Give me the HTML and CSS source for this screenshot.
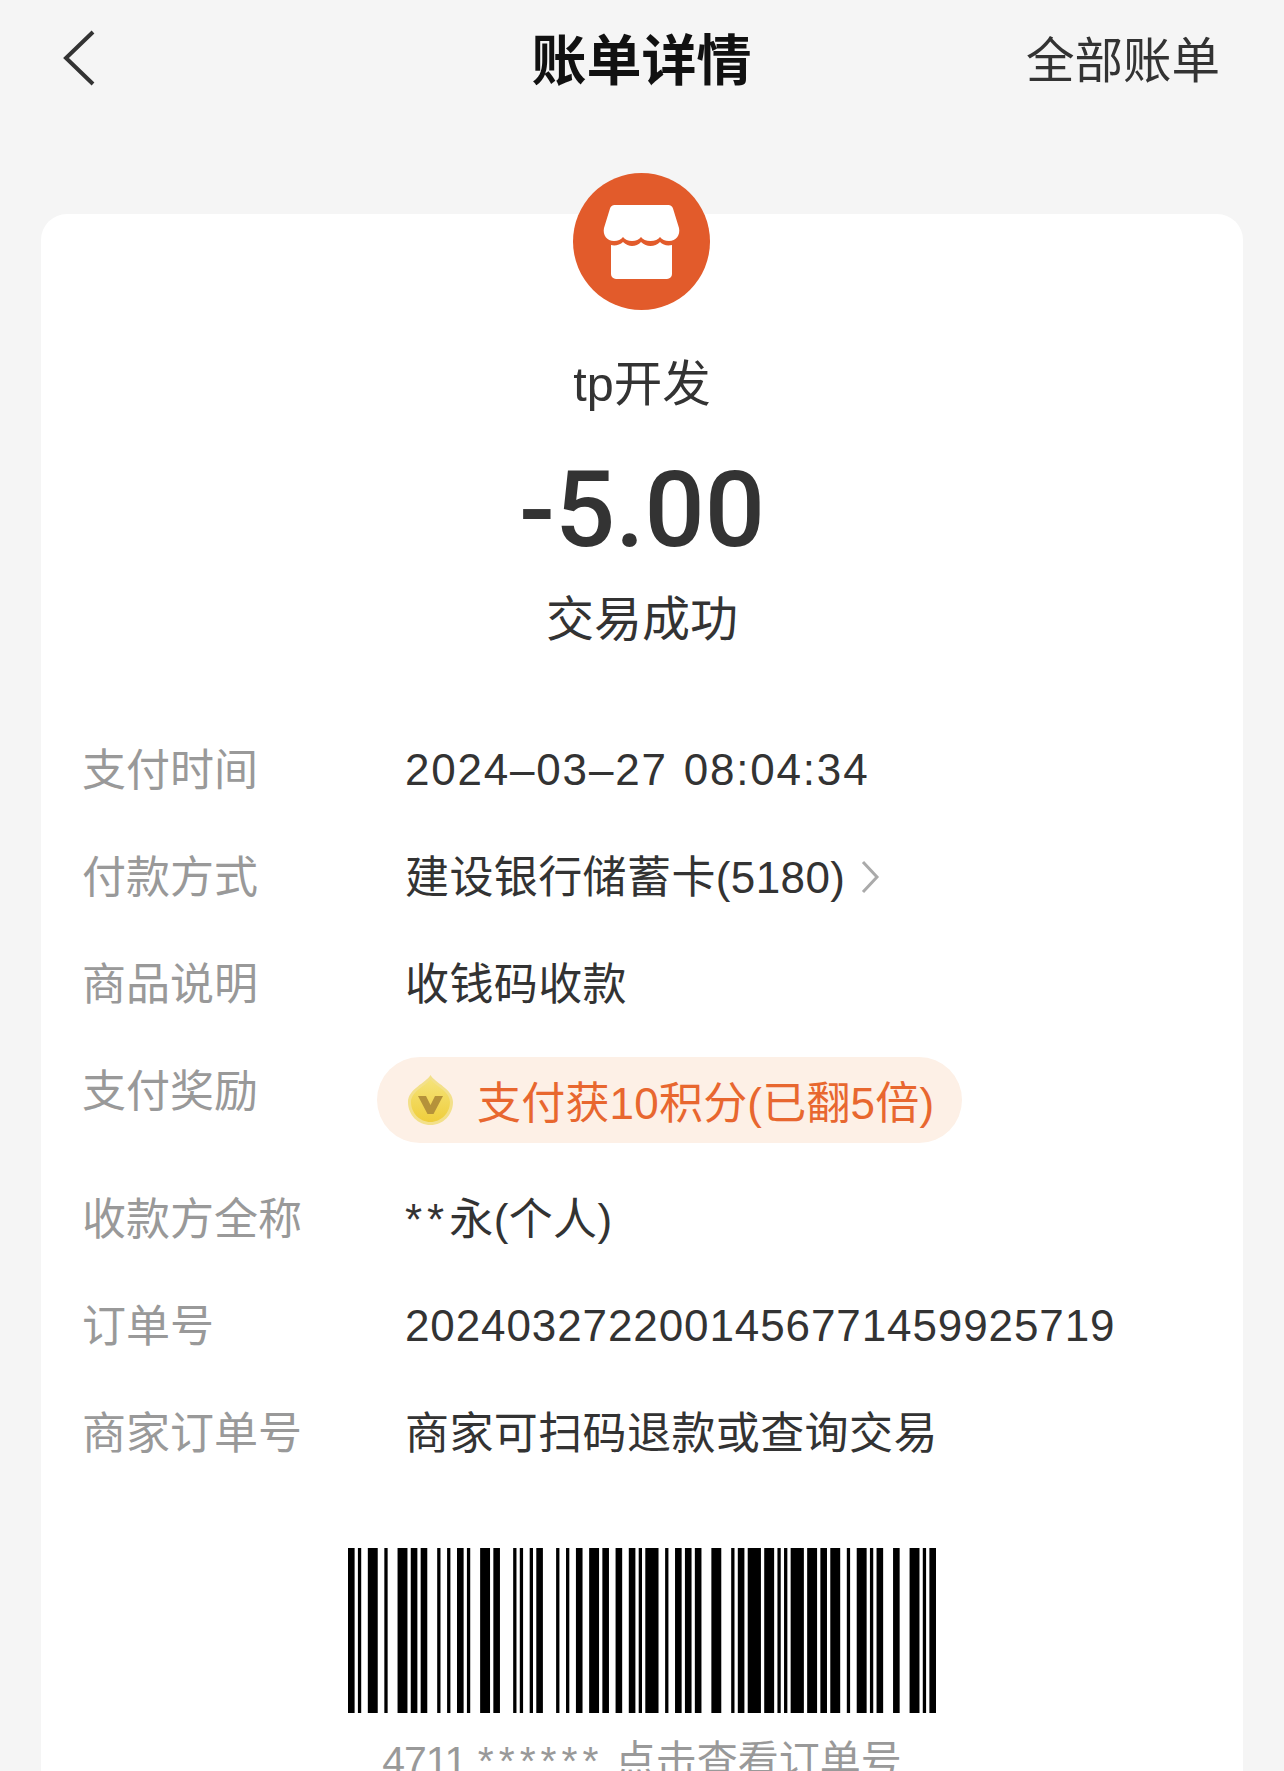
FILE: index.html
```html
<!DOCTYPE html>
<html lang="zh-CN">

<head>
    <meta charset="utf-8">
    <meta name="viewport" content="width=device-width, initial-scale=1.0">
    <title>账单详情</title>
    <link rel="stylesheet" href="styles.css">
</head>

<body>
    <header class="topbar">
        <svg class="back" viewBox="0 0 34 56" width="34" height="56">
            <path d="M31 2 L4 28 L31 54" />
        </svg>
        <h1>账单详情</h1>
        <a class="all">全部账单</a>
    </header>

    <main class="card">
        <svg class="shop" viewBox="0 0 137 137" width="137" height="137">
            <circle cx="68.5" cy="68.5" r="68.5" fill="#e25b2b" />
            <path fill="#fff" d="M42 32H95a5 5 0 0 1 5 3.500L106 55c1.500 7-3 13-10 13c-4 0-7-1.500-9-4c-2 2.500-5 4-9.500 4s-7.500-1.500-9.500-4c-2 2.500-5 4-9 4s-7-1.500-9-4c-2 2.500-5 4-9 4c-7 0-11.500-6-10-13L37 35.500a5 5 0 0 1 5-3.500z" />
            <path fill="#fff" d="M38 72c4 1 9 0 12-3c3 2.500 6 4 9 4s7-1.500 9-4c3 2.500 6 4 9.500 4s7-1.500 9.500-4c3 3 7 4 12 3V101a5 5 0 0 1-5 5H43a5 5 0 0 1-5-5z" />
        </svg>
        <div class="name">tp开发</div>
        <div class="amount">-5.00</div>
        <div class="status">交易成功</div>

        <div class="rows">
            <div class="row">
                <span class="label">支付时间</span>
                <span class="value num date">2024–03–27 08:04:34</span>
            </div>
            <div class="row">
                <span class="label">付款方式</span>
                <span class="value">建设银行储蓄卡(5180)</span>
                <svg class="more" viewBox="0 0 20 34" width="20" height="34">
                    <path d="M3 2 L17 17 L3 32" />
                </svg>
            </div>
            <div class="row">
                <span class="label">商品说明</span>
                <span class="value">收钱码收款</span>
            </div>
            <div class="row row-reward">
                <span class="label">支付奖励</span>
                <div class="pill">
                    <svg class="coin" viewBox="0 0 45 50" width="45" height="50">
                        <defs>
                            <linearGradient id="coingrad" x1="0" y1="0" x2="0" y2="1">
                                <stop offset="0" stop-color="#f5e37a" />
                                <stop offset="1" stop-color="#efce3c" />
                            </linearGradient>
                        </defs>
                        <path fill="#f3e08a" d="M22.500 0C27 8 45 14 45 27C45 40 35 50 22.500 50S0 40 0 27C0 14 18 8 22.500 0z" />
                        <path fill="url(#coingrad)" d="M22.500 4C27 11 42 16 42 27C42 38 33 47 22.500 47S3 38 3 27C3 16 18 11 22.500 4z" />
                        <path fill="#b5923a" d="M10 21H18L22.500 30L27 21H35L25.500 39H19.500z" />
                    </svg>
                    <span class="pill-text">支付获10积分(已翻5倍)</span>
                </div>
            </div>
            <div class="row">
                <span class="label">收款方全称</span>
                <span class="value"><span class="stars">**</span>永(个人)</span>
            </div>
            <div class="row">
                <span class="label">订单号</span>
                <span class="value num">2024032722001456771459925719</span>
            </div>
            <div class="row">
                <span class="label">商家订单号</span>
                <span class="value">商家可扫码退款或查询交易</span>
            </div>
        </div>

        <div class="code">
            <svg class="barcode" viewBox="0 0 178 165" preserveAspectRatio="none">
                <path d="M0 0h2v165h-2zM3 0h1v165h-1zM6 0h3v165h-3zM11 0h1v165h-1zM15 0h3v165h-3zM19 0h2v165h-2zM22 0h2v165h-2zM27 0h1v165h-1zM30 0h1v165h-1zM33 0h2v165h-2zM36 0h1v165h-1zM40 0h3v165h-3zM44 0h2v165h-2zM50 0h1v165h-1zM52 0h1v165h-1zM55 0h1v165h-1zM57 0h2v165h-2zM63 0h1v165h-1zM66 0h1v165h-1zM69 0h2v165h-2zM73 0h3v165h-3zM77 0h2v165h-2zM81 0h2v165h-2zM85 0h2v165h-2zM88 0h1v165h-1zM90 0h4v165h-4zM96 0h1v165h-1zM99 0h2v165h-2zM102 0h2v165h-2zM105 0h2v165h-2zM110 0h3v165h-3zM116 0h1v165h-1zM118 0h2v165h-2zM121 0h4v165h-4zM126 0h3v165h-3zM130 0h1v165h-1zM132 0h1v165h-1zM134 0h4v165h-4zM139 0h3v165h-3zM143 0h2v165h-2zM146 0h3v165h-3zM151 0h1v165h-1zM154 0h3v165h-3zM158 0h1v165h-1zM160 0h2v165h-2zM165 0h2v165h-2zM170 0h3v165h-3zM174 0h1v165h-1zM176 0h2v165h-2z" />
            </svg>
            <div class="code-text"><span class="prefix">4711</span> <span class="stars">******</span> 点击查看订单号</div>
        </div>
    </main>
</body>

</html>
```

FILE: styles.css
```css
html,
body {
    margin: 0;
    height: 1771px;
    overflow: hidden;
}

body {
    background-color: #f5f5f5;
    font-family: "Liberation Sans", "Noto Sans CJK SC", sans-serif;
    color: #333;
}

/* TOP BAR */

.topbar {
    display: grid;
    grid-template-columns: 1fr auto 1fr;
    align-items: center;
    height: 214px;
    padding: 0 64px 93px 63px;
    box-sizing: border-box;
}

.back {
    margin: -5px 0 0 -1px;
}

.back path {
    fill: none;
    stroke: #333;
    stroke-width: 4;
}

h1 {
    margin: 0;
    font-size: 55px;
    line-height: 60px;
    font-weight: 700;
    color: #111;
}

.all {
    justify-self: end;
    font-size: 48.500px;
    line-height: 60px;
    color: #333;
}

/* CARD */

.card {
    margin: 0 41px;
    background-color: #fff;
    border-radius: 26px 26px 0 0;
    display: flex;
    flex-direction: column;
    align-items: center;
    height: 1557px;
}

.shop {
    margin-top: -41px;
    margin-left: -2px;
    flex-shrink: 0;
}

.name {
    margin-top: 43.500px;
    font-size: 48.500px;
    line-height: 60px;
}

.amount {
    margin-top: 36.500px;
    font-family: Roboto, "Liberation Sans", sans-serif;
    font-size: 106px;
    line-height: 120px;
    font-weight: 500;
}

.status {
    margin-top: 20px;
    font-size: 48px;
    line-height: 60px;
}

/* ROWS */

.rows {
    align-self: stretch;
    margin-top: 63.500px;
    padding-left: 41px;
}

.row {
    display: flex;
    align-items: center;
    height: 107px;
    font-size: 44px;
}

.row-reward {
    align-items: flex-start;
    height: 128px;
}

.label {
    width: 323px;
    flex-shrink: 0;
    color: #999;
}

.row-reward .label {
    margin-top: 21px;
}

.value {
    color: #333;
    letter-spacing: 0.4px;
}

.num {
    letter-spacing: 0.9px;
    padding-top: 6px;
}

.date {
    letter-spacing: 1.800px;
    word-spacing: 2px;
}

.more {
    margin: 6px 0 0 15px;
}

.more path {
    fill: none;
    stroke: #aaa;
    stroke-width: 3;
}

.pill {
    display: flex;
    align-items: center;
    margin: 22px 0 0 -28px;
    height: 86px;
    padding: 0 28px 0 31px;
    border-radius: 43px;
    background-color: #fdf0e6;
    color: #e8672f;
}

.coin {
    margin-right: 24px;
}

.pill-text {
    letter-spacing: 0.200px;
}

/* BARCODE */

.code {
    margin-top: 64px;
    text-align: center;
}

.barcode {
    display: block;
    width: 588px;
    height: 165px;
    margin: 0 auto;
}

.code-text {
    margin-top: 18px;
    font-size: 41px;
    line-height: 60px;
    color: #999;
    white-space: nowrap;
}

.prefix {
    letter-spacing: -1px;
}

.stars {
    letter-spacing: 5px;
}
```
